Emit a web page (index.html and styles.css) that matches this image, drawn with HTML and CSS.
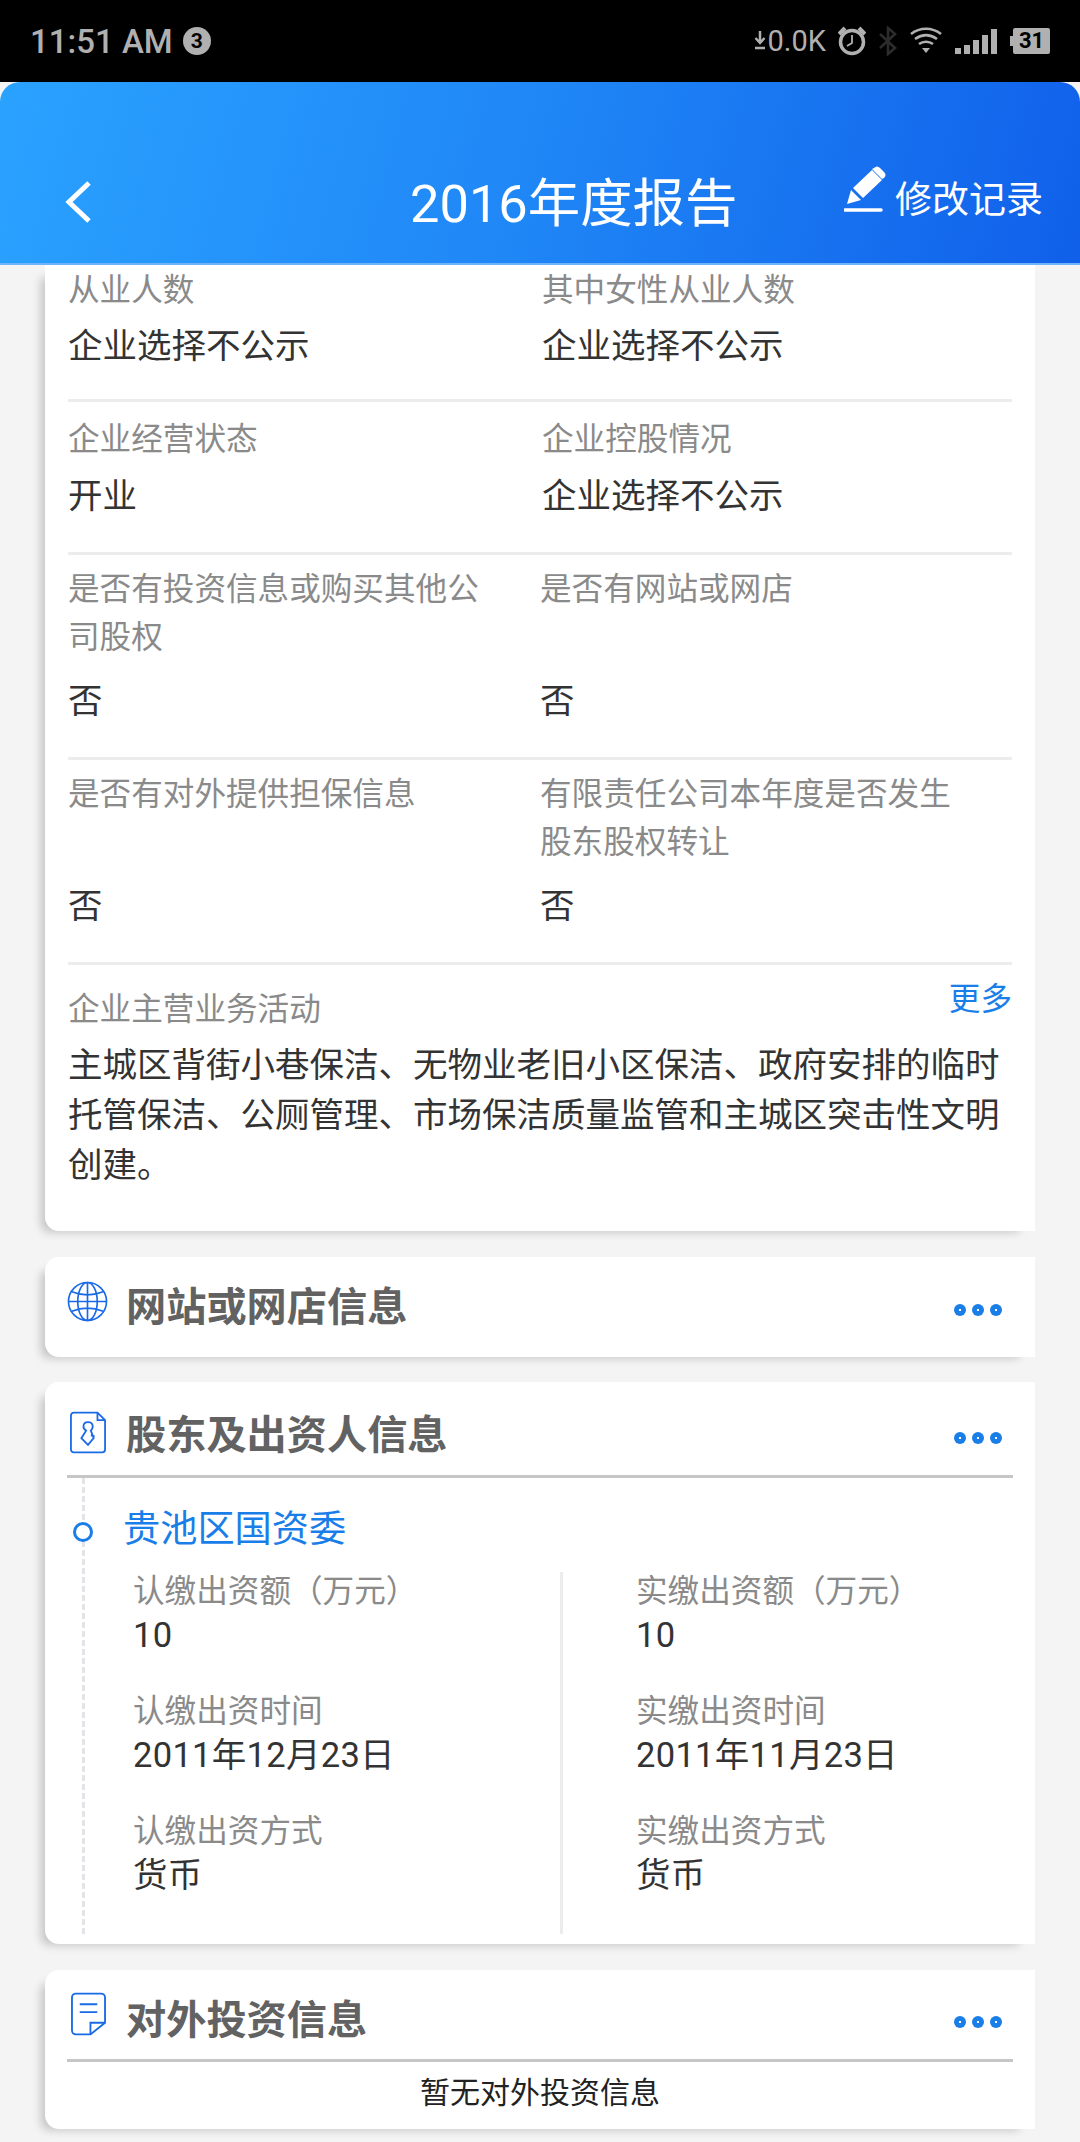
FILE: index.html
```html
<!DOCTYPE html>
<html lang="zh-CN">
<head>
    <meta charset="UTF-8">
    <meta name="viewport" content="width=device-width, initial-scale=1.0">
    <title>2016年度报告</title>
    <link rel="stylesheet" href="styles.css">
</head>
<body>

<div class="statusbar">
    <div class="status-left">
        <span class="clock">11:51 AM</span>
        <span class="notif">3</span>
    </div>
    <div class="status-right">
        <svg class="ic-down" width="12" height="26" viewBox="0 0 12 26"><path d="M6 3v11M1.500 10L6 15l4.500-5" fill="none" stroke="#b0b0b0" stroke-width="2.500"/><path d="M1 20h10" stroke="#b0b0b0" stroke-width="2.500"/></svg>
        <span class="speed">0.0K</span>
        <svg class="ic-alarm" width="28" height="30" viewBox="0 0 28 30"><circle cx="14" cy="16" r="11.500" fill="none" stroke="#b0b0b0" stroke-width="3.500"/><path d="M14 9v8l-5 3" fill="none" stroke="#b0b0b0" stroke-width="1.800"/><path d="M1 8l6-6M27 8l-6-6" stroke="#b0b0b0" stroke-width="4"/></svg>
        <svg class="ic-bt" width="20" height="30" viewBox="0 0 20 30"><path d="M2 8l15 14-7 6V2l7 6L2 22" fill="none" stroke="#2c2c2c" stroke-width="2.600"/></svg>
        <svg class="ic-wifi" width="32" height="28" viewBox="0 0 32 28"><path d="M1 7c9-7 21-7 30 0M5 12c7-5 15-5 22 0M9 17c4-3 10-3 14 0" fill="none" stroke="#b0b0b0" stroke-width="2.600"/><path d="M12 21h8l-4 5z" fill="#b0b0b0"/></svg>
        <div class="signal"><i class="b1"></i><i class="b2"></i><i class="b3"></i><i class="b4"></i><i class="b5"></i></div>
        <div class="battery"><span>31</span></div>
    </div>
</div>

<header>
    <svg class="back" width="28" height="44" viewBox="0 0 28 44"><path d="M25 3L5 22l20 19" fill="none" stroke="#fff" stroke-width="5"/></svg>
    <h1>2016年度报告</h1>
    <div class="history">
        <svg width="44" height="46" viewBox="0 0 44 46"><path d="M1 44h36" stroke="#fff" stroke-width="3.500" stroke-linecap="round"/><path d="M3 38l4-14 10 10zM9 22L28 4l10 10-19 18z" fill="#fff"/><path d="M30 2c2-2 4-2 6 0l4 4c2 2 2 4 0 6l-2 1-10-10z" fill="#fff"/></svg>
        <span>修改记录</span>
    </div>
</header>

<main>
    <section class="card card-info">
        <div class="row first">
            <div class="cell"><p class="label">从业人数</p><p class="value">企业选择不公示</p></div>
            <div class="cell shift"><p class="label">其中女性从业人数</p><p class="value">企业选择不公示</p></div>
        </div>
        <div class="row">
            <div class="cell"><p class="label">企业经营状态</p><p class="value">开业</p></div>
            <div class="cell shift"><p class="label">企业控股情况</p><p class="value">企业选择不公示</p></div>
        </div>
        <div class="row tall">
            <div class="cell"><p class="label">是否有投资信息或购买其他公司股权</p><p class="value">否</p></div>
            <div class="cell"><p class="label">是否有网站或网店</p><p class="value">否</p></div>
        </div>
        <div class="row tall">
            <div class="cell"><p class="label">是否有对外提供担保信息</p><p class="value">否</p></div>
            <div class="cell"><p class="label">有限责任公司本年度是否发生股东股权转让</p><p class="value">否</p></div>
        </div>
        <div class="business">
            <a class="more" href="#">更多</a>
            <p class="label">企业主营业务活动</p>
            <p class="desc">主城区背街小巷保洁、无物业老旧小区保洁、政府安排的临时托管保洁、公厕管理、市场保洁质量监管和主城区突击性文明创建。</p>
        </div>
    </section>

    <section class="card card-site">
        <div class="card-head">
            <span class="head-slot"><svg class="head-ic" width="41" height="41" viewBox="0 0 42 42"><g fill="none" stroke="#1a6ae6" stroke-width="1.700"><circle cx="21" cy="21" r="19.500"/><ellipse cx="21" cy="21" rx="10" ry="19.500"/><path d="M21 2v38M2 21h38M5 11c10 4 22 4 32 0M5 31c10-4 22-4 32 0"/></g></svg></span>
            <h2>网站或网店信息</h2>
            <div class="dots"><i></i><i></i><i></i></div>
        </div>
    </section>

    <section class="card card-holder">
        <div class="card-head ruled">
            <span class="head-slot"><svg class="head-ic" width="36" height="43" viewBox="0 0 38 44"><g fill="none" stroke="#1a6ae6" stroke-width="1.900"><path d="M4 1h25l8 8v31a3 3 0 0 1-3 3H4a3 3 0 0 1-3-3V4a3 3 0 0 1 3-3zM29 1v8h8"/><path d="M19 11c-6 0-6 7-2 9l-5 8 7 7 6-7-3-8c3-3 3-9-3-9zM22 25l4 1"/></g></svg></span>
            <h2>股东及出资人信息</h2>
            <div class="dots"><i></i><i></i><i></i></div>
        </div>
        <div class="holder">
            <span class="node"></span>
            <p class="holder-name">贵池区国资委</p>
            <div class="pay">
                <div class="pay-col">
                    <p class="label">认缴出资额（万元）</p><p class="value">10</p>
                    <p class="label">认缴出资时间</p><p class="value">2011年12月23日</p>
                    <p class="label">认缴出资方式</p><p class="value">货币</p>
                </div>
                <div class="pay-col">
                    <p class="label">实缴出资额（万元）</p><p class="value">10</p>
                    <p class="label">实缴出资时间</p><p class="value">2011年11月23日</p>
                    <p class="label">实缴出资方式</p><p class="value">货币</p>
                </div>
            </div>
        </div>
    </section>

    <section class="card card-invest">
        <div class="card-head ruled">
            <span class="head-slot"><svg class="head-ic" width="35" height="44" viewBox="0 0 36 44"><g fill="none" stroke="#1a6ae6" stroke-width="1.900"><path d="M20 43H5a4 4 0 0 1-4-4V5a4 4 0 0 1 4-4h26a4 4 0 0 1 4 4v26L20 43z"/><path d="M20 43V31h15"/><path d="M9 12h18M9 20h18"/></g></svg></span>
            <h2>对外投资信息</h2>
            <div class="dots"><i></i><i></i><i></i></div>
        </div>
        <p class="empty">暂无对外投资信息</p>
    </section>
</main>

</body>
</html>
```

FILE: styles.css
```css
* {
    box-sizing: border-box;
}
html, body {
    margin: 0;
    padding: 0;
}
body {
    width: 1080px;
    height: 2142px;
    overflow: hidden;
    background-color: #f4f4f4;
    font-family: Roboto, 'Noto Sans CJK SC', sans-serif;
    color: #333;
}
p, h1, h2 {
    margin: 0;
    font-weight: 400;
}

/* status bar */
.statusbar {
    height: 82px;
    background-color: #000;
    display: flex;
    justify-content: space-between;
    align-items: center;
    padding: 0 30px;
}
.status-left {
    display: flex;
    align-items: center;
}
.clock {
    font-size: 33px;
    font-weight: 500;
    color: #b0b0b0;
}
.notif {
    width: 28px;
    height: 28px;
    margin-left: 10px;
    border-radius: 50%;
    background-color: #b0b0b0;
    color: #000;
    font-size: 21px;
    font-weight: 700;
    line-height: 28px;
    text-align: center;
}
.status-right {
    display: flex;
    align-items: center;
}
.speed {
    font-size: 29px;
    color: #b0b0b0;
    margin-left: 2px;
}
.ic-alarm,
.ic-bt,
.ic-wifi {
    margin-left: 12px;
}
.signal {
    display: flex;
    align-items: flex-end;
    gap: 3px;
    height: 25px;
    margin-left: 13px;
}
.signal i {
    display: block;
    width: 6px;
    background-color: #b0b0b0;
}
.b1 { height: 6px; }
.b2 { height: 9px; }
.b3 { height: 14px; }
.b4 { height: 19px; }
.b5 { height: 25px; }
.battery {
    position: relative;
    width: 37px;
    height: 26px;
    margin-left: 16px;
    border-radius: 2px;
    background-color: #b0b0b0;
    color: #000;
    font-size: 22px;
    font-weight: 700;
    line-height: 26px;
    text-align: center;
}
.battery::before {
    content: "";
    position: absolute;
    left: -3px;
    top: 8px;
    width: 3px;
    height: 10px;
    background-color: #b0b0b0;
}

/* header */
header {
    position: relative;
    z-index: 1;
    height: 183px;
    border-radius: 20px 20px 0 0;
    border-bottom: 2px solid #6fb4f8;
    background: linear-gradient(105deg, #2aa2ff 0%, #1f86f6 50%, #1060ea 100%);
    display: flex;
    align-items: flex-start;
    padding: 0 37px 0 64px;
    color: #fff;
}
.back {
    flex: none;
    margin-top: 98px;
}
header h1 {
    margin-left: 318px;
    margin-top: 87px;
    font-size: 52.4px;
    line-height: 70px;
    white-space: nowrap;
}
.history {
    margin-left: auto;
    margin-top: 84px;
    display: flex;
    align-items: flex-start;
}
.history svg {
    margin-right: 7px;
}
.history span {
    margin-top: 10px;
    font-size: 37px;
    line-height: 50px;
}

/* cards */
.card {
    background-color: #fff;
    width: 990px;
    margin-left: 45px;
    border-radius: 14px 0 0 14px;
    box-shadow: -10px 7px 10px -6px rgba(0, 0, 0, 0.2);
}
.card-info {
    height: 966px;
    padding: 0 23px;
    border-top-left-radius: 0;
}
.card-site {
    margin-top: 26px;
    height: 100px;
}
.card-holder {
    margin-top: 25px;
    height: 562px;
}
.card-invest {
    margin-top: 26px;
    height: 159px;
}

/* info rows */
.row {
    display: grid;
    grid-template-columns: 472px 472px;
    height: 153px;
    padding-top: 14px;
    border-bottom: 3px solid #ececec;
}
.row.first {
    height: 137px;
    padding-top: 2px;
}
.row.tall {
    height: 205px;
    padding-top: 11px;
}
.label {
    font-size: 31.6px;
    line-height: 48px;
    color: #8a8a8a;
}
.value {
    font-size: 34.5px;
    line-height: 48px;
    margin-top: 8px;
    color: #333;
}
.row.first .value {
    margin-top: 7px;
}
.cell {
    padding-right: 50px;
}
.row.tall .cell {
    display: flex;
    flex-direction: column;
}
.row.tall .value {
    margin-top: auto;
    margin-bottom: 32px;
}
.shift {
    padding-left: 2px;
}
.business {
    position: relative;
    padding-top: 21px;
}
.more {
    position: absolute;
    right: 0;
    top: 12px;
    font-size: 31.6px;
    line-height: 46px;
    color: #1a7ee8;
    text-decoration: none;
}
.desc {
    font-size: 34.5px;
    line-height: 50px;
    margin-top: 6px;
    color: #333;
}

/* section head */
.card-head {
    display: flex;
    align-items: flex-start;
    margin: 0 22px;
    height: 100px;
}
.card-holder .card-head {
    height: 96px;
}
.card-invest .card-head {
    height: 92px;
}
.card-head.ruled {
    border-bottom: 3px solid #c6c6c6;
}
.head-slot {
    flex: none;
    display: block;
    width: 59px;
}
.head-ic {
    display: block;
}
.card-head h2 {
    font-size: 40.2px;
    font-weight: 700;
    line-height: 56px;
    color: #626262;
}
.dots {
    display: flex;
    gap: 6px;
    margin-left: auto;
    margin-right: 11px;
}
.dots i {
    display: block;
    position: relative;
    width: 12px;
    height: 12px;
    border-radius: 50%;
    background-color: #1a7ee8;
}
.dots i::after {
    content: "";
    position: absolute;
    left: 5px;
    top: 5px;
    width: 2px;
    height: 2px;
    background-color: #fff;
}
.card-site .head-ic { margin-top: 24px; }
.card-site h2 { margin-top: 23px; }
.card-site .dots { margin-top: 47px; }
.card-holder .head-ic { margin-top: 29px; margin-left: 3px; }
.card-holder h2 { margin-top: 26px; }
.card-holder .dots { margin-top: 50px; }
.card-invest .head-ic { margin-top: 22px; margin-left: 4px; }
.card-invest h2 { margin-top: 23px; }
.card-invest .dots { margin-top: 46px; }

/* shareholder */
.holder {
    position: relative;
    margin-left: 37px;
    height: 456px;
    padding-top: 28px;
    border-left: 3px dashed #e2e4e8;
}
.node {
    position: absolute;
    left: -12px;
    top: 44px;
    width: 20px;
    height: 20px;
    border: 3px solid #1a7ee8;
    border-radius: 50%;
    background-color: #fff;
}
.holder-name {
    margin-left: 38px;
    font-size: 37.2px;
    line-height: 46px;
    color: #1a7ee8;
}
.pay {
    display: grid;
    grid-template-columns: 430px 1fr;
    margin-top: 20px;
    margin-left: 48px;
}
.pay-col {
    height: 362px;
    padding-top: 3px;
}
.pay-col:first-child {
    border-right: 3px solid #ececec;
}
.pay-col:last-child {
    padding-left: 73px;
}
.pay .label {
    line-height: 34px;
    margin-top: 38px;
}
.pay .label:first-child {
    margin-top: 0;
}
.pay .value {
    line-height: 44px;
    margin-top: 4px;
    letter-spacing: 0.3px;
}
.empty {
    text-align: center;
    font-size: 30px;
    line-height: 42px;
    margin-top: 10px;
    color: #222;
}
```
